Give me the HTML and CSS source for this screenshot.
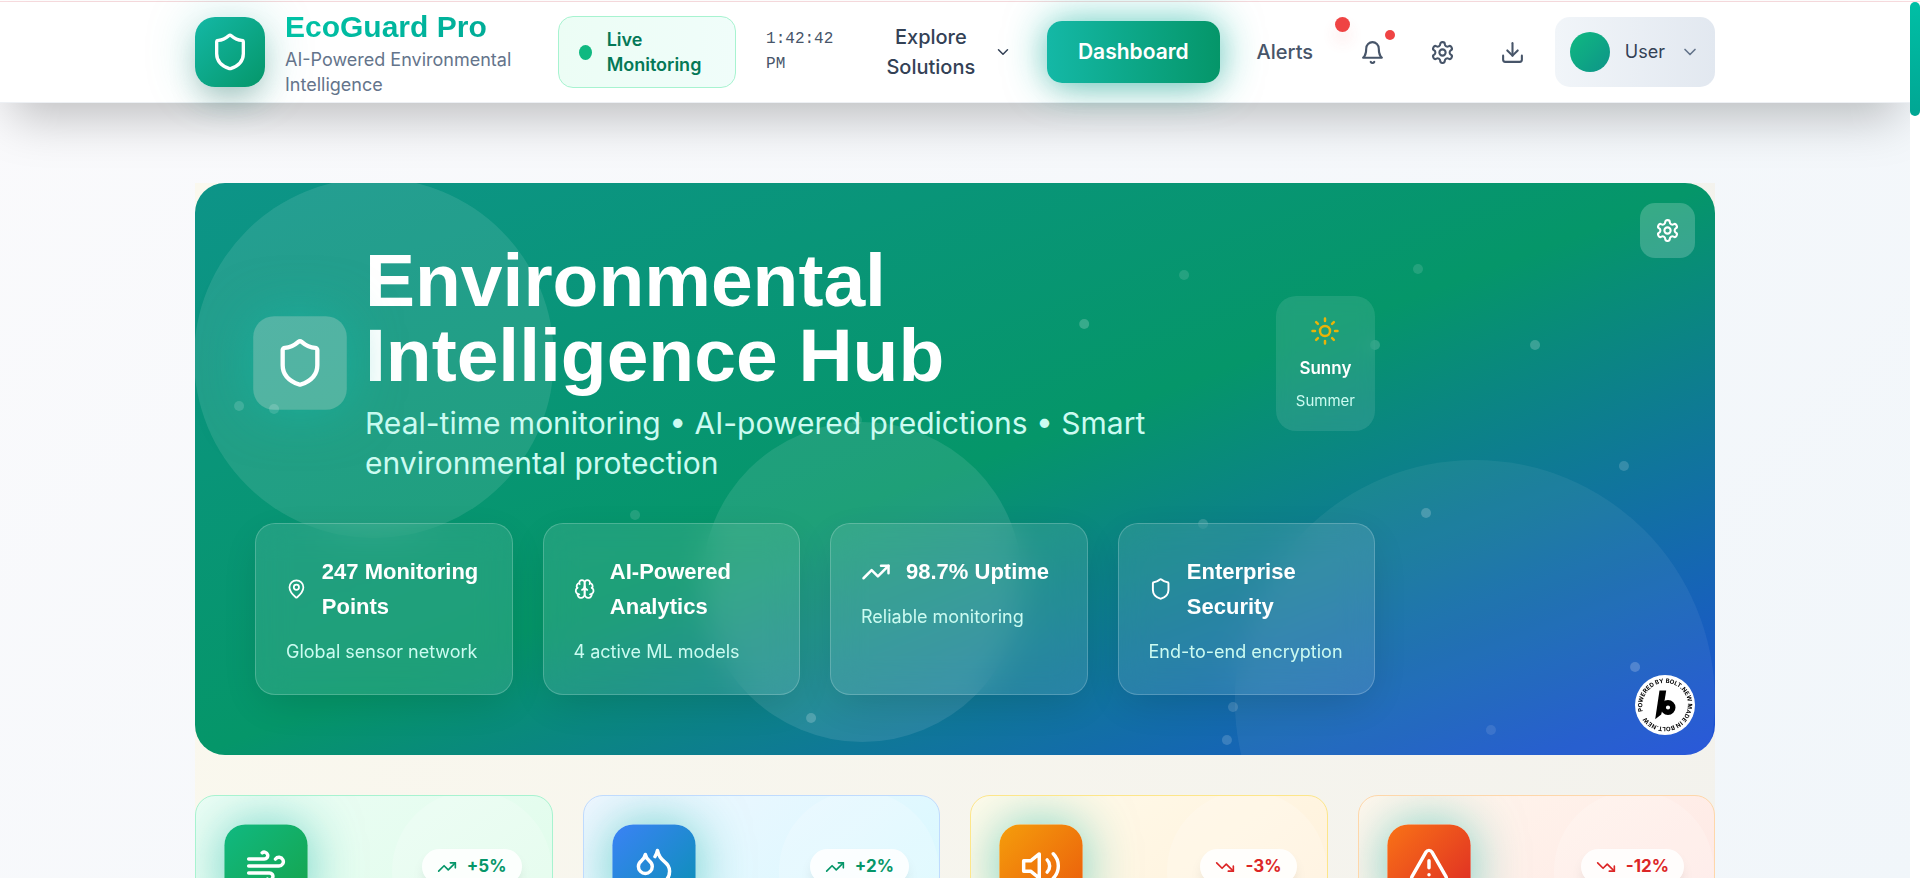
FILE: index.html
```html
<!DOCTYPE html>
<html lang="en">
<head>
<meta charset="utf-8">
<meta name="viewport" content="width=device-width, initial-scale=1">
<title>EcoGuard Pro</title>
<link rel="stylesheet" href="styles.css">
</head>
<body>
<svg class="defs" aria-hidden="true">
  <symbol id="shield" viewBox="0 0 24 24"><path d="M20 13c0 5-3.500 7.500-7.660 8.950a1 1 0 0 1-.67-.01C7.500 20.500 4 18 4 13V6a1 1 0 0 1 1-1c2 0 4.500-1.200 6.240-2.720a1.170 1.170 0 0 1 1.520 0C14.510 3.810 17 5 19 5a1 1 0 0 1 1 1z"/></symbol>
  <symbol id="chevron" viewBox="0 0 24 24"><path d="m6 9 6 6 6-6"/></symbol>
  <symbol id="gear" viewBox="0 0 24 24"><path d="M12.220 2h-.44a2 2 0 0 0-2 2v.18a2 2 0 0 1-1 1.730l-.43.25a2 2 0 0 1-2 0l-.15-.08a2 2 0 0 0-2.730.73l-.22.38a2 2 0 0 0 .73 2.730l.15.1a2 2 0 0 1 1 1.720v.51a2 2 0 0 1-1 1.740l-.15.09a2 2 0 0 0-.73 2.730l.22.38a2 2 0 0 0 2.730.73l.15-.08a2 2 0 0 1 2 0l.43.25a2 2 0 0 1 1 1.730V20a2 2 0 0 0 2 2h.44a2 2 0 0 0 2-2v-.18a2 2 0 0 1 1-1.730l.43-.25a2 2 0 0 1 2 0l.15.08a2 2 0 0 0 2.730-.73l.22-.39a2 2 0 0 0-.73-2.730l-.15-.08a2 2 0 0 1-1-1.740v-.5a2 2 0 0 1 1-1.740l.15-.09a2 2 0 0 0 .73-2.730l-.22-.38a2 2 0 0 0-2.730-.73l-.15.08a2 2 0 0 1-2 0l-.43-.25a2 2 0 0 1-1-1.730V4a2 2 0 0 0-2-2z"/><circle cx="12" cy="12" r="3"/></symbol>
  <symbol id="up" viewBox="0 0 24 24"><path d="m22 7-8.500 8.500-5-5L2 17"/><path d="M16 7h6v6"/></symbol>
  <symbol id="down" viewBox="0 0 24 24"><path d="m22 17-8.500-8.500-5 5L2 7"/><path d="M16 17h6v-6"/></symbol>
</svg>

<div class="topline"></div>
<header class="header">
  <div class="container bar">
    <div class="brand">
      <span class="brand-logo"><svg class="icon i40"><use href="#shield"/></svg></span>
      <div>
        <div class="brand-name">EcoGuard Pro</div>
        <div class="brand-sub">AI-Powered Environmental Intelligence</div>
      </div>
    </div>
    <div class="live"><span class="live-dot"></span><span>Live Monitoring</span></div>
    <time class="clock">1:42:42 PM</time>
    <nav class="nav">
      <button class="nav-item explore" type="button"><span>Explore Solutions</span><svg class="icon i18"><use href="#chevron"/></svg></button>
      <button class="nav-item dashboard" type="button">Dashboard</button>
      <button class="nav-item alerts" type="button">Alerts<i class="dot big"></i></button>
    </nav>
    <div class="tools">
      <button class="tool" type="button" aria-label="Notifications"><svg class="icon i25" viewBox="0 0 24 24"><path d="M6 8a6 6 0 0 1 12 0c0 7 3 9 3 9H3s3-2 3-9"/><path d="M10.300 21a1.940 1.940 0 0 0 3.400 0"/></svg><i class="dot small"></i></button>
      <button class="tool" type="button" aria-label="Settings"><svg class="icon i25"><use href="#gear"/></svg></button>
      <button class="tool" type="button" aria-label="Download"><svg class="icon i25" viewBox="0 0 24 24"><path d="M21 15v4a2 2 0 0 1-2 2H5a2 2 0 0 1-2-2v-4"/><path d="m7 10 5 5 5-5"/><path d="M12 15V3"/></svg></button>
      <button class="user" type="button"><span class="avatar"></span><span>User</span><svg class="icon i20"><use href="#chevron"/></svg></button>
    </div>
  </div>
</header>

<main class="main">
  <div class="container content">
    <section class="hero">
      <svg class="hero-art" aria-hidden="true">
        <g fill="#fff" fill-opacity=".1">
          <circle cx="179" cy="175" r="180"/>
          <circle cx="43.900%" cy="399" r="160"/>
          <circle cx="84.200%" cy="517" r="240" fill-opacity=".06"/>
        </g>
        <g fill="#fff" fill-opacity=".16">
          <circle cx="2.900%" cy="223" r="5"/><circle cx="5.200%" cy="226" r="5"/>
          <circle cx="65.070%" cy="92" r="5" fill-opacity=".12"/><circle cx="80.460%" cy="86" r="5" fill-opacity=".12"/>
          <circle cx="58.500%" cy="141" r="5" fill-opacity=".2"/><circle cx="77.630%" cy="162" r="5"/>
          <circle cx="43.550%" cy="237" r="5" fill-opacity=".1"/><circle cx="88.160%" cy="162" r="5" fill-opacity=".2"/>
          <circle cx="94.010%" cy="283" r="5"/><circle cx="28.950%" cy="332" r="5" fill-opacity=".12"/>
          <circle cx="40.530%" cy="535" r="5" fill-opacity=".2"/><circle cx="66.320%" cy="341" r="5"/>
          <circle cx="80.990%" cy="330" r="5" fill-opacity=".2"/><circle cx="68.290%" cy="524" r="5"/>
          <circle cx="67.890%" cy="557" r="5"/><circle cx="94.740%" cy="484" r="5" fill-opacity=".2"/>
          <circle cx="85.260%" cy="547" r="5" fill-opacity=".1"/>
        </g>
      </svg>
      <button class="hero-settings" type="button" aria-label="Hub settings"><svg class="icon i25"><use href="#gear"/></svg></button>
      <div class="hero-body">
        <div class="hero-head">
          <span class="hero-logo"><svg class="icon i50"><use href="#shield"/></svg></span>
          <div class="hero-copy">
            <h1>Environmental Intelligence Hub</h1>
            <p>Real-time monitoring • AI-powered predictions • Smart environmental protection</p>
          </div>
          <div class="weather">
            <svg class="icon i30" viewBox="0 0 24 24"><circle cx="12" cy="12" r="4"/><path d="M12 2v2M12 20v2M4.930 4.930l1.410 1.410M17.660 17.660l1.410 1.410M2 12h2M20 12h2M6.340 17.660l-1.410 1.410M19.070 4.930l-1.410 1.410"/></svg>
            <b>Sunny</b>
            <small>Summer</small>
          </div>
        </div>
        <div class="features">
          <article class="feature">
            <h2><svg class="icon i30" viewBox="0 0 24 24"><path d="M20 10c0 5-5.540 10.190-7.400 11.800a1 1 0 0 1-1.200 0C9.540 20.190 4 15 4 10a8 8 0 0 1 16 0"/><circle cx="12" cy="10" r="3"/></svg><span>247 Monitoring Points</span></h2>
            <p>Global sensor network</p>
          </article>
          <article class="feature">
            <h2><svg class="icon i30" viewBox="0 0 24 24"><path d="M12 5a3 3 0 1 0-5.997.125 4 4 0 0 0-2.526 5.770 4 4 0 0 0 .556 6.588A4 4 0 1 0 12 18Z"/><path d="M12 5a3 3 0 1 1 5.997.125 4 4 0 0 1 2.526 5.770 4 4 0 0 1-.556 6.588A4 4 0 1 1 12 18Z"/><path d="M15 13a4.500 4.500 0 0 1-3-4 4.500 4.500 0 0 1-3 4"/><path d="M17.599 6.500a3 3 0 0 0 .399-1.375M6.003 5.125A3 3 0 0 0 6.401 6.500M3.477 10.896a4 4 0 0 1 .585-.396M19.938 10.500a4 4 0 0 1 .585.396M6 18a4 4 0 0 1-1.967-.516M19.967 17.484A4 4 0 0 1 18 18"/></svg><span>AI-Powered Analytics</span></h2>
            <p>4 active ML models</p>
          </article>
          <article class="feature">
            <h2><svg class="icon i30"><use href="#up"/></svg><span>98.7% Uptime</span></h2>
            <p>Reliable monitoring</p>
          </article>
          <article class="feature">
            <h2><svg class="icon i30"><use href="#shield"/></svg><span>Enterprise Security</span></h2>
            <p>End-to-end encryption</p>
          </article>
        </div>
      </div>
    </section>

    <section class="metrics">
      <article class="metric air">
        <span class="metric-icon"><svg class="icon i40" viewBox="0 0 24 24"><path d="M12.800 19.600A2 2 0 1 0 14 16H2"/><path d="M17.500 8a2.500 2.500 0 1 1 2 4H2"/><path d="M9.800 4.400A2 2 0 1 1 11 8H2"/></svg></span>
        <span class="trend good"><svg class="icon i20"><use href="#up"/></svg>+5%</span>
      </article>
      <article class="metric water">
        <span class="metric-icon"><svg class="icon i40" viewBox="0 0 24 24"><path d="M7 16.300c2.200 0 4-1.830 4-4.050 0-1.160-.57-2.260-1.710-3.190S7.290 6.750 7 5.300c-.29 1.450-1.140 2.840-2.290 3.760S3 11.100 3 12.250c0 2.220 1.800 4.050 4 4.050z"/><path d="M12.560 6.600A10.970 10.970 0 0 0 14 3.020c.5 2.500 2 4.900 4 6.500s3 3.500 3 5.500a6.980 6.980 0 0 1-11.910 4.970"/></svg></span>
        <span class="trend good"><svg class="icon i20"><use href="#up"/></svg>+2%</span>
      </article>
      <article class="metric noise">
        <span class="metric-icon"><svg class="icon i40" viewBox="0 0 24 24"><path d="M11 5 6 9H2v6h4l5 4z"/><path d="M15.540 8.460a5 5 0 0 1 0 7.070"/><path d="M19.070 4.930a10 10 0 0 1 0 14.140"/></svg></span>
        <span class="trend bad"><svg class="icon i20"><use href="#down"/></svg>-3%</span>
      </article>
      <article class="metric risk">
        <span class="metric-icon"><svg class="icon i40" viewBox="0 0 24 24"><path d="m21.730 18-8-14a2 2 0 0 0-3.480 0l-8 14A2 2 0 0 0 4 21h16a2 2 0 0 0 1.730-3"/><path d="M12 9v4M12 17h.01"/></svg></span>
        <span class="trend bad"><svg class="icon i20"><use href="#down"/></svg>-12%</span>
      </article>
    </section>
  </div>
</main>

<a class="bolt" href="#" aria-label="Powered by Bolt.new">
  <svg viewBox="0 0 60 60" width="60" height="60">
    <circle cx="30" cy="30" r="30" fill="#fff"/>
    <path id="ring" d="M7.900 36.300A23 23 0 0 1 52.100 23.700A23 23 0 0 1 7.900 36.300" fill="none"/>
    <text class="ring-text"><textPath href="#ring">POWERED BY BOLT.NEW MADE IN BOLT.NEW</textPath></text>
    <path d="M24.500 15.500h6.700l-1.700 10.500-3.300 13.500-6 4.700z"/>
    <circle cx="33" cy="32.500" r="4.800" fill="none" stroke="#000" stroke-width="5.400"/>
  </svg>
</a>
<div class="scroll-track"><div class="scroll-thumb"></div></div>
</body>
</html>
```

FILE: styles.css
```css
* { box-sizing: border-box; margin: 0; padding: 0; }
body {
  height: 100vh;
  overflow: hidden;
  padding-right: 10px;
  font-family: Inter, "Liberation Sans", sans-serif;
  font-size: 20px;
  line-height: 30px;
  color: #334155;
  background: linear-gradient(135deg, #fafafc, #f1f6fa);
}
button { font: inherit; color: inherit; background: none; border: 0; cursor: pointer; }
.defs { display: none; }
.icon { fill: none; stroke: currentColor; stroke-width: 2; stroke-linecap: round; stroke-linejoin: round; }
.i18 { width: 18px; height: 18px; }
.i20 { width: 20px; height: 20px; }
.i25 { width: 25px; height: 25px; }
.i30 { width: 30px; height: 30px; }
.i40 { width: 40px; height: 40px; }
.i50 { width: 50px; height: 50px; }
.container { max-width: 1520px; margin: 0 auto; }

.topline { height: 2px; margin-right: -10px; background: #fff; border-bottom: 1px solid #f8dcdf; }
.header {
  position: relative;
  z-index: 2;
  background: #fff;
  border-bottom: 1px solid #edf0f4;
  box-shadow: 0 25px 50px -12px rgba(0, 0, 0, .25);
}
.bar { display: flex; align-items: center; padding: 5px 0; }
.brand { display: flex; align-items: center; gap: 20px; width: 334px; margin-right: 30px; }
.brand-logo {
  flex: none;
  display: grid;
  place-items: center;
  width: 70px;
  height: 70px;
  border-radius: 20px;
  color: #fff;
  background: linear-gradient(135deg, #14b8a6, #059669);
  box-shadow: 0 15px 30px -5px rgba(15, 80, 70, .3), 0 0 50px rgba(20, 184, 166, .25);
}
.brand-name {
  font: bold 30px/40px "Liberation Sans", sans-serif;
  color: transparent;
  background: linear-gradient(135deg, #00c4a7, #00a693);
  -webkit-background-clip: text;
  background-clip: text;
}
.brand-sub { font-size: 18px; line-height: 25px; color: #64748b; }
.live {
  display: flex;
  align-items: center;
  gap: 15px;
  width: 179px;
  padding: 10px 20px;
  border: 1px solid #a7f3d0;
  border-radius: 15px;
  font-size: 18px;
  font-weight: 600;
  line-height: 25px;
  color: #047857;
  background: linear-gradient(90deg, #ecfdf5, #f0fdfa);
}
.live-dot { flex: none; width: 13px; height: 15px; border-radius: 50%; background: #10b981; }
.clock {
  width: 70px;
  margin: 0 20px 0 30px;
  font: 16px/25px "Liberation Mono", monospace;
  color: #475569;
}
.nav { display: flex; align-items: center; gap: 5px; font-weight: 500; }
.nav-item { height: 62px; padding: 0 30px; border-radius: 15px; }
.explore { display: flex; align-items: center; gap: 18px; width: 186px; }
.explore span { flex: 1; }
.explore .icon { flex: none; }
.dashboard {
  width: 173px;
  font-size: 21px;
  font-weight: 600;
  color: #fff;
  background: linear-gradient(90deg, #14b8a6, #059669);
  box-shadow: 0 0 40px rgba(20, 184, 166, .65), 0 10px 30px -8px rgba(0, 60, 50, .2);
}
.alerts { position: relative; height: 60px; width: 120px; color: #475569; }
.dot { position: absolute; border-radius: 50%; background: #ef4444; }
.dot.big { top: -5px; right: -5px; width: 15px; height: 15px; box-shadow: 0 10px 15px rgba(239, 68, 68, .12); }
.dot.small { top: 5px; right: 5px; width: 10px; height: 10px; }
.tools { display: flex; align-items: center; gap: 15px; margin-left: auto; }
.tool { position: relative; display: grid; place-items: center; width: 55px; height: 55px; color: #475569; }
.user {
  display: flex;
  align-items: center;
  gap: 15px;
  height: 70px;
  padding: 0 15px;
  border-radius: 15px;
  font-size: 18px;
  background: linear-gradient(90deg, #f1f5f9, #e2e8f0);
}
.user .icon { color: #64748b; }
.avatar { width: 40px; height: 40px; border-radius: 50%; background: linear-gradient(135deg, #10b981, #0d9488); }

.main { padding-top: 80px; }
.content { background: linear-gradient(100deg, #faf8ee, #f3f2ed); }
.hero {
  position: relative;
  overflow: hidden;
  padding: 60px;
  border-radius: 30px;
  color: #fff;
  background: linear-gradient(to bottom right, #0d9488, #059669 50%, #1d4ed8);
}
.hero-art { position: absolute; inset: 0; width: 100%; height: 100%; }
.hero-settings {
  position: absolute;
  top: 20px;
  right: 20px;
  display: grid;
  place-items: center;
  width: 55px;
  height: 55px;
  border-radius: 15px;
  background: rgba(255, 255, 255, .2);
}
.hero-body { position: relative; width: 80%; }
.hero-head { display: flex; align-items: center; gap: 20px; }
.hero-logo {
  flex: none;
  display: grid;
  place-items: center;
  width: 90px;
  height: 90px;
  border-radius: 20px;
  background: rgba(255, 255, 255, .22);
  box-shadow: 0 0 50px rgba(20, 184, 166, .6);
  transform: scale(1.04);
}
.hero-copy { flex: 1; max-width: 800px; }
h1 { font: bold 75px/75px "Liberation Sans", sans-serif; max-width: 600px; }
.hero-copy p { margin-top: 10px; font-size: 30px; line-height: 40px; color: #ccfbf1; }
.weather {
  display: flex;
  flex-direction: column;
  align-items: center;
  margin-left: auto;
  padding: 20px;
  border-radius: 20px;
  background: rgba(255, 255, 255, .1);
  backdrop-filter: blur(8px);
}
.weather .icon { color: #eab308; }
.weather b { margin-top: 10px; font-size: 17px; font-weight: 600; line-height: 25px; }
.weather small { margin-top: 10px; font-size: 15px; line-height: 20px; color: #ccfbf1; }
.features { display: grid; grid-template-columns: repeat(4, 1fr); gap: 30px; margin-top: 40px; }
.feature {
  padding: 30px;
  border: 1px solid rgba(255, 255, 255, .2);
  border-radius: 20px;
  background: rgba(255, 255, 255, .1);
  backdrop-filter: blur(16px);
  box-shadow: 0 12px 40px -8px rgba(0, 0, 0, .14);
}
.feature h2 { display: flex; align-items: center; gap: 15px; font: bold 22px/35px "Liberation Sans", sans-serif; }
.feature p { margin-top: 15px; font-size: 18px; line-height: 25px; color: #ccfbf1; }

.metrics { display: grid; grid-template-columns: repeat(4, 1fr); gap: 30px; margin-top: 40px; }
.metric {
  position: relative;
  overflow: hidden;
  display: flex;
  align-items: flex-start;
  justify-content: space-between;
  min-height: 260px;
  padding: 30px;
  border: 1px solid;
  border-radius: 20px;
}
.metric::before {
  content: "";
  position: absolute;
  top: -5px;
  right: 0;
  width: 160px;
  height: 160px;
  border-radius: 50%;
  background: rgba(255, 255, 255, .2);
}
.metric-icon {
  position: relative;
  display: grid;
  place-items: center;
  width: 80px;
  height: 80px;
  border-radius: 20px;
  color: #fff;
  box-shadow: 0 0 50px rgba(20, 184, 166, .6);
  transform: scale(1.04);
}
.trend {
  position: relative;
  display: flex;
  align-items: center;
  gap: 10px;
  margin-top: 23px;
  padding: 5px 15px;
  border-radius: 20px;
  font-size: 17px;
  font-weight: 700;
  line-height: 25px;
  background: rgba(255, 255, 255, .85);
  box-shadow: 0 8px 14px -3px rgba(0, 0, 0, .1);
}
.good { color: #059669; }
.bad { color: #dc2626; }
.air { border-color: #a7f3d0; background: linear-gradient(to bottom right, #ecfdf5, #dcfce7); }
.water { border-color: #bfdbfe; background: linear-gradient(to bottom right, #eff6ff, #cffafe); }
.noise { border-color: #fde68a; background: linear-gradient(to bottom right, #fffbeb, #ffedd5); }
.risk { border-color: #fed7aa; background: linear-gradient(to bottom right, #fff7ed, #fee2e2); }
.air .metric-icon { background: linear-gradient(135deg, #10b981, #16a34a); }
.water .metric-icon { background: linear-gradient(135deg, #3b82f6, #0891b2); }
.noise .metric-icon { background: linear-gradient(135deg, #f59e0b, #ea580c); }
.risk .metric-icon { background: linear-gradient(135deg, #f97316, #dc2626); }

.bolt { position: fixed; right: 225px; bottom: 143px; z-index: 3; width: 60px; height: 60px; }
.bolt svg { display: block; }
.ring-text { font: bold 6px Inter, sans-serif; }
.scroll-track { position: fixed; top: 2px; right: 0; bottom: 0; z-index: 4; width: 10px; background: #fff; }
.scroll-thumb { height: 114px; border-radius: 5px; background: linear-gradient(#00bfa5, #00a693); }
```
